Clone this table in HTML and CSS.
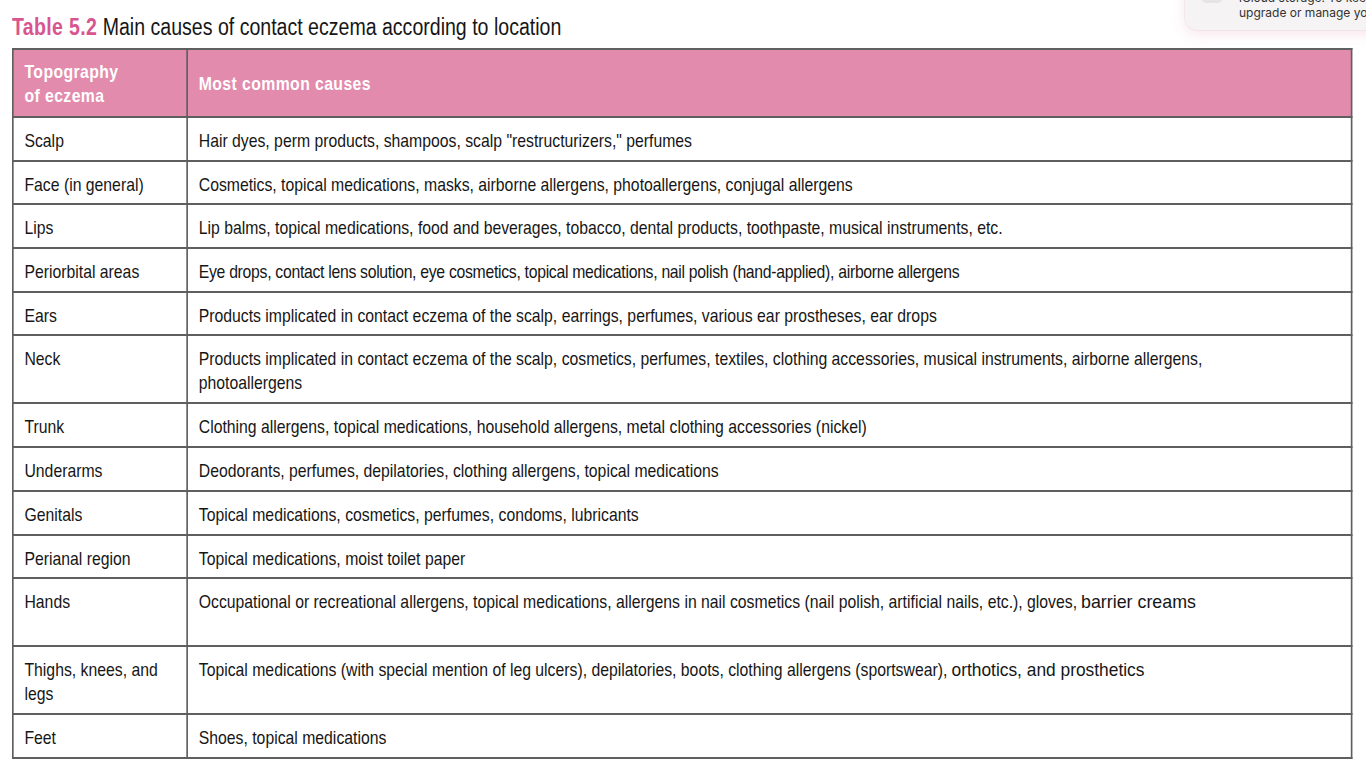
FILE: index.html
```html
<!DOCTYPE html>
<html>
<head>
<meta charset="utf-8">
<link rel="stylesheet" href="styles.css">
</head>
<body>
<div class="page">
  <h1 class="title"><span class="tag">Table 5.2</span> <span class="title-text">Main causes of contact eczema according to location</span></h1>
  <div class="table-wrap">
  <table class="causes">
    <thead>
      <tr class="head"><th class="c1">Topography<br>of eczema</th><th class="c2">Most common causes</th></tr>
    </thead>
    <tbody>
      <tr><td class="c1">Scalp</td><td class="c2">Hair dyes, perm products, shampoos, scalp "restructurizers," perfumes</td></tr>
      <tr><td class="c1">Face (in general)</td><td class="c2">Cosmetics, topical medications, masks, airborne allergens, photoallergens, conjugal allergens</td></tr>
      <tr><td class="c1">Lips</td><td class="c2">Lip balms, topical medications, food and beverages, tobacco, dental products, toothpaste, musical instruments, etc.</td></tr>
      <tr><td class="c1">Periorbital areas</td><td class="c2 tight">Eye drops, contact lens solution, eye cosmetics, topical medications, nail polish (hand-applied), airborne allergens</td></tr>
      <tr><td class="c1">Ears</td><td class="c2">Products implicated in contact eczema of the scalp, earrings, perfumes, various ear prostheses, ear drops</td></tr>
      <tr class="tall"><td class="c1">Neck</td><td class="c2">Products implicated in contact eczema of the scalp, cosmetics, perfumes, textiles, clothing accessories, musical instruments, airborne allergens,<br>photoallergens</td></tr>
      <tr><td class="c1">Trunk</td><td class="c2">Clothing allergens, topical medications, household allergens, metal clothing accessories (nickel)</td></tr>
      <tr><td class="c1">Underarms</td><td class="c2">Deodorants, perfumes, depilatories, clothing allergens, topical medications</td></tr>
      <tr><td class="c1">Genitals</td><td class="c2">Topical medications, cosmetics, perfumes, condoms, lubricants</td></tr>
      <tr><td class="c1">Perianal region</td><td class="c2">Topical medications, moist toilet paper</td></tr>
      <tr class="tall"><td class="c1">Hands</td><td class="c2">Occupational or recreational allergens, topical medications, allergens in nail cosmetics (nail polish, artificial nails, etc.), gloves, <span class="wide">barrier creams</span></td></tr>
      <tr class="tall"><td class="c1">Thighs, knees, and<br>legs</td><td class="c2">Topical medications (with special mention of leg ulcers), depilatories, boots, clothing allergens (sportswear), <span class="wider">orthotics, and prosthetics</span></td></tr>
      <tr><td class="c1">Feet</td><td class="c2">Shoes, topical medications</td></tr>
    </tbody>
  </table>
  </div>
</div>
<div class="notice">
  <div class="notice-icon"></div>
  <div class="notice-text">iCloud storage. To keep<br>upgrade or manage your</div>
</div>
</body>
</html>
```
FILE: styles.css
```css
html, body {
  margin: 0;
  padding: 0;
  background: #ffffff;
}
body {
  width: 1366px;
  height: 767px;
  overflow: hidden;
  position: relative;
  font-family: "Liberation Sans", Arial, sans-serif;
  color: #161616;
}
.page {
  padding: 13px 0 0 12px;
}
.title {
  margin: 0 0 7px 0;
  font-size: 23px;
  font-weight: normal;
  line-height: 28px;
  color: #161616;
  white-space: nowrap;
  transform: scaleX(0.85);
  transform-origin: left top;
}
.title .tag {
  color: #d8558f;
  font-weight: bold;
  letter-spacing: 0.4px;
}
.table-wrap {
  width: 1615px;
  transform: scaleX(0.83);
  transform-origin: left top;
}
.causes {
  border-collapse: collapse;
  width: 1615px;
  font-size: 19px;
  line-height: 24px;
  white-space: nowrap;
}
.causes td, .causes th {
  border: 2px solid #5f5f5f;
  padding: 11px 13px 6px 13px;
  vertical-align: top;
  text-align: left;
}
.causes .c1 {
  width: 182px;
}
.head th {
  background: #e28bac;
  color: #ffffff;
  font-weight: bold;
  height: 48px;
  padding-top: 10px;
  padding-bottom: 8px;
  vertical-align: middle;
  line-height: 24px;
  letter-spacing: 0.5px;
}
.causes tbody tr {
  height: 43.7px;
}
.causes tbody tr.tall {
  height: 68px;
}
.tight {
  letter-spacing: -0.35px;
}
.wide {
  display: inline-block;
  transform: scaleX(1.13);
  transform-origin: left top;
}
.wider {
  display: inline-block;
  transform: scaleX(1.1);
  transform-origin: left top;
}
.notice {
  position: absolute;
  top: -30px;
  left: 1185px;
  width: 230px;
  height: 60px;
  border-radius: 12px;
  background: #f5f3f4;
  box-shadow: 0 4px 14px rgba(230, 150, 175, 0.25), 0 0 0 1px rgba(0,0,0,0.04);
  display: flex;
  align-items: flex-end;
  gap: 16px;
  padding: 0 0 10px 16px;
  box-sizing: border-box;
}
.notice-icon {
  width: 22px;
  height: 22px;
  border-radius: 6px;
  background: #e6e4e6;
  margin-bottom: 17px;
}
.notice-text {
  font-family: "Inter", "Liberation Sans", sans-serif;
  font-size: 12px;
  line-height: 15px;
  color: #333333;
  white-space: nowrap;
}
```
